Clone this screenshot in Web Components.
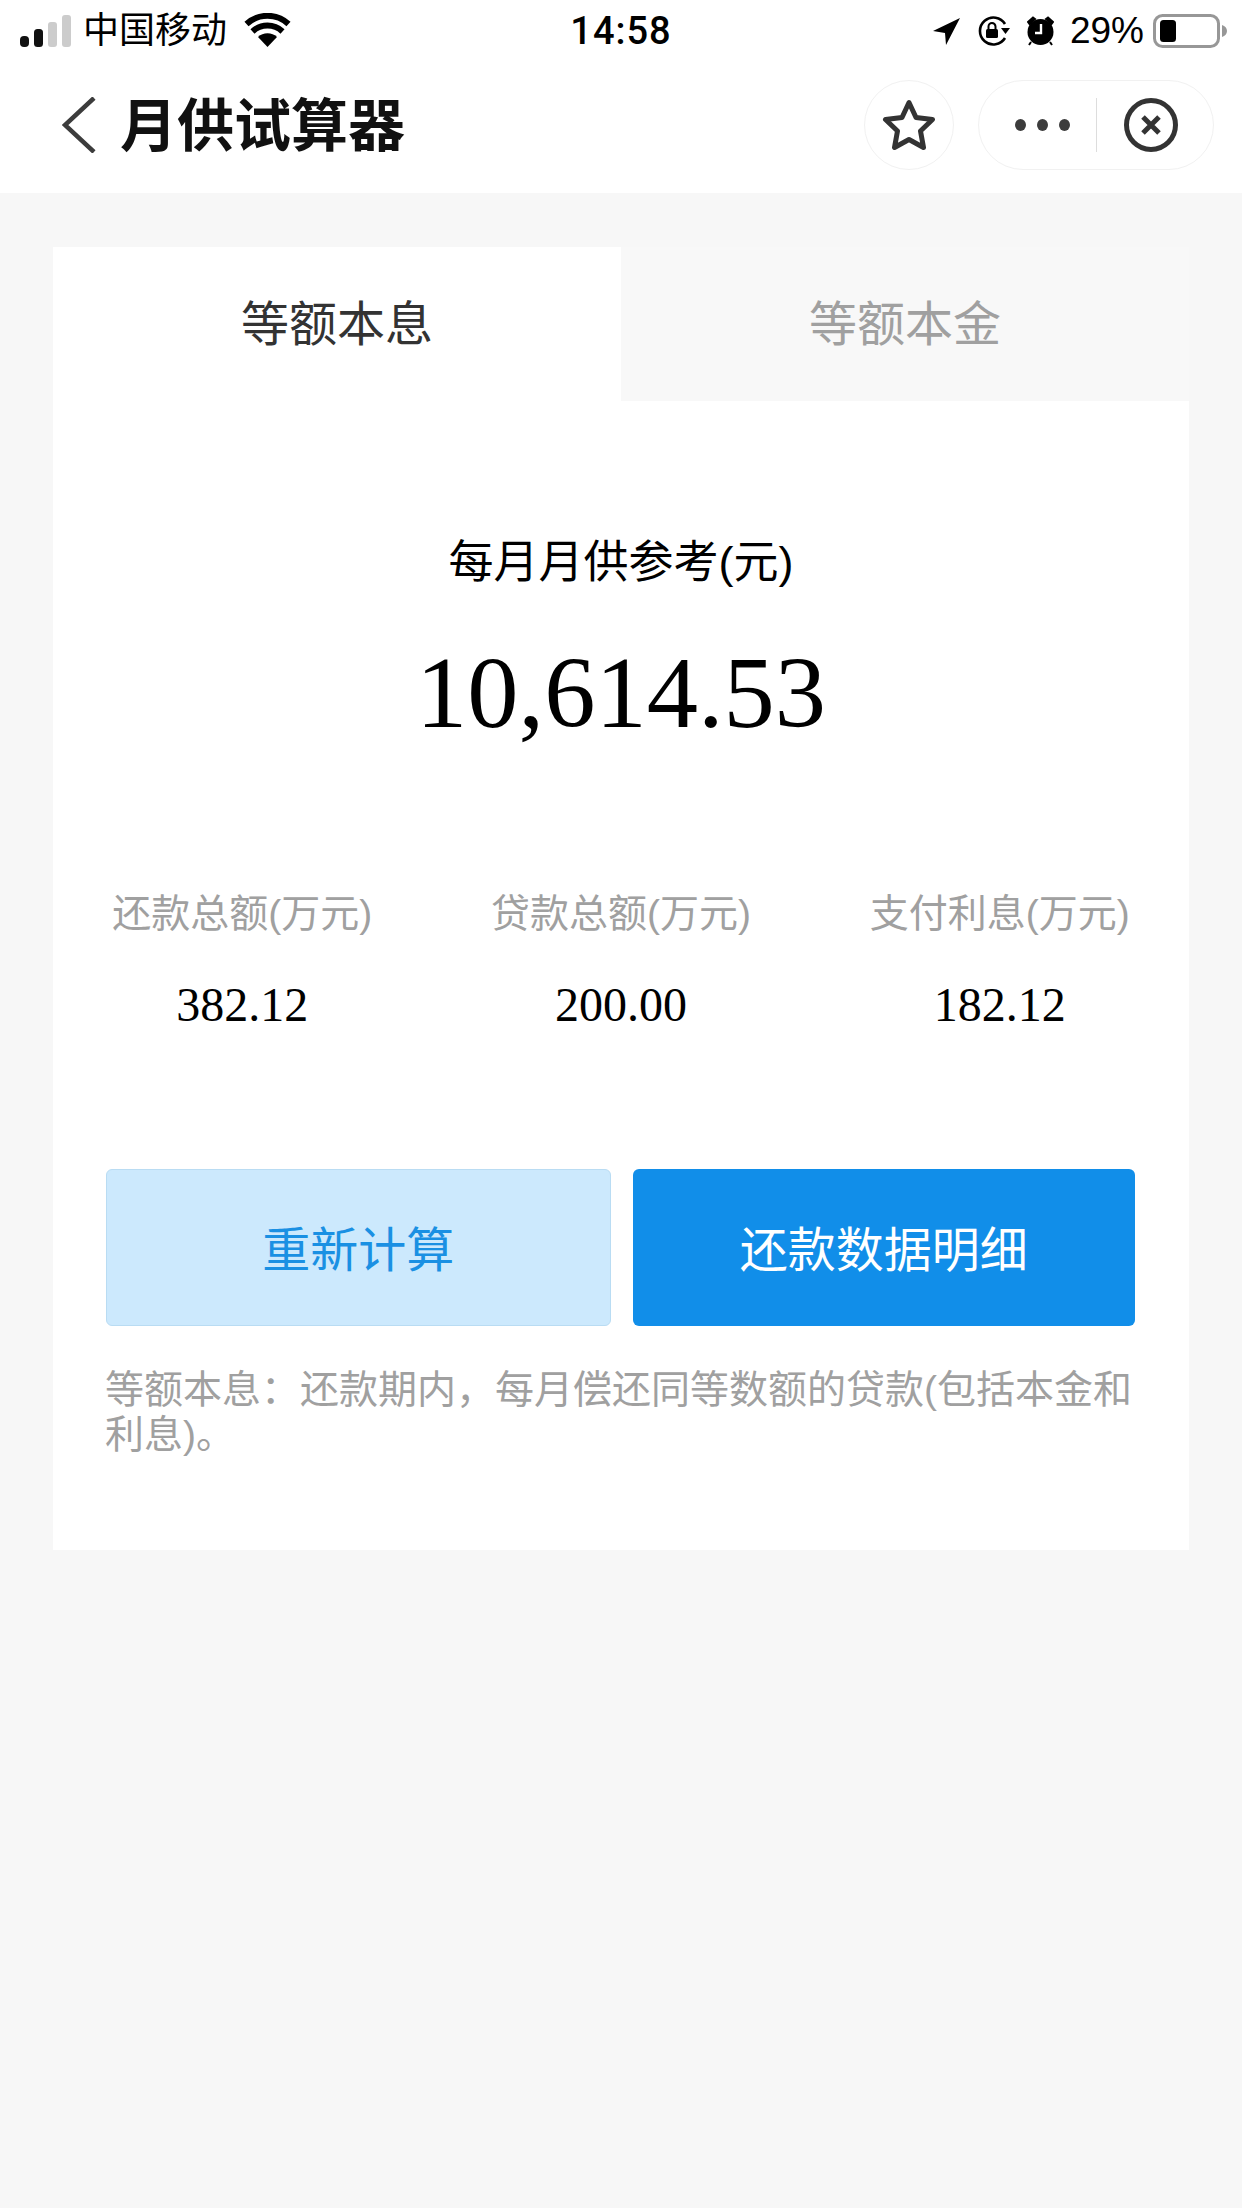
<!DOCTYPE html>
<html lang="zh">
<head>
<meta charset="utf-8">
<title>月供试算器</title>
<style>
  html, body { margin: 0; padding: 0; }
  body {
    width: 1242px;
    min-height: 2208px;
    background: #f7f7f7;
    font-family: "Liberation Sans", "Noto Sans CJK SC", sans-serif;
  }
</style>
</head>
<body>
<status-bar></status-bar>
<nav-bar title="月供试算器"></nav-bar>
<calc-card>
  <calc-tabs slot="tabs" active="等额本息" other="等额本金"></calc-tabs>
  <monthly-amount slot="amount" label="每月月供参考(元)" value="10,614.53"></monthly-amount>
  <stat-item slot="stats" label="还款总额(万元)" value="382.12"></stat-item>
  <stat-item slot="stats" label="贷款总额(万元)" value="200.00"></stat-item>
  <stat-item slot="stats" label="支付利息(万元)" value="182.12"></stat-item>
  <action-button slot="actions" kind="light">重新计算</action-button>
  <action-button slot="actions" kind="primary">还款数据明细</action-button>
  <span slot="note">等额本息：还款期内，每月偿还同等数额的贷款(包括本金和利息)。</span>
</calc-card>

<script>
class StatusBar extends HTMLElement {
  constructor() {
    super();
    this.attachShadow({ mode: "open" });
    this.shadowRoot.innerHTML = `
      <style>
        :host {
          display: grid;
          grid-template-columns: 1fr auto 1fr;
          align-items: center;
          height: 58px;
          padding: 2px 15px 0 20px;
          box-sizing: border-box;
          background: #fff;
          color: #000;
          font-size: 36px;
        }
        .left, .right { display: flex; align-items: center; }
        .right { justify-content: flex-end; }
        .carrier { margin-left: 12px; line-height: 58px; }
        .wifi { margin-left: 17px; margin-top: -3px; }
        .time { margin-right: 5px; font-family: Roboto, sans-serif; font-weight: 500; font-size: 38px; letter-spacing: 1px; }
        .loc { margin-right: 18px; }
        .lock { margin-right: 17px; }
        .alarm { margin-right: 16px; }
        .pct { font-family: "Liberation Sans", sans-serif; font-size: 37px; margin-right: 9px; }
        svg { display: block; }
      </style>
      <div class="left">
        <svg width="51" height="32" viewBox="0 0 51 32">
          <rect x="0" y="21" width="9" height="11" rx="4" fill="#111"/>
          <rect x="14" y="14" width="9" height="18" rx="3.5" fill="#111"/>
          <rect x="28" y="7" width="9" height="25" rx="3" fill="#ccc"/>
          <rect x="42" y="0" width="9" height="32" rx="3" fill="#ccc"/>
        </svg>
        <span class="carrier">中国移动</span>
        <svg class="wifi" width="47" height="34" viewBox="0 0 47 34">
          <path d="M23.5 34 L14 24 A14 14 0 0 1 33 24 Z" fill="#000"/>
          <path d="M8.5 18.5 A22 22 0 0 1 38.5 18.5" fill="none" stroke="#000" stroke-width="6"/>
          <path d="M2.5 11 A31 31 0 0 1 44.5 11" fill="none" stroke="#000" stroke-width="6"/>
        </svg>
      </div>
      <div class="time">14:58</div>
      <div class="right">
        <svg class="loc" width="27" height="27" viewBox="0 0 27 27">
          <path d="M27 0 L0 13 L12 15 L13 27 Z" fill="#000"/>
        </svg>
        <svg class="lock" width="32" height="30" viewBox="0 0 32 30">
          <path d="M27 8 A13.5 13.5 0 1 0 27 22" fill="none" stroke="#000" stroke-width="2.6"/>
          <path d="M23 12 L32 12 L27.500 18 Z" fill="#000"/>
          <rect x="8" y="13" width="12" height="9" rx="1.500" fill="#000"/>
          <path d="M10.500 13 V10.500 A3.500 3.500 0 0 1 17.500 10.500 V13" fill="none" stroke="#000" stroke-width="2"/>
        </svg>
        <svg class="alarm" width="27" height="30" viewBox="0 0 27 30">
          <circle cx="13.500" cy="16" r="13" fill="#000"/>
          <path d="M1 6 L6 1.500 L8 3 L2.500 8 Z M26 6 L21 1.500 L19 3 L24.500 8 Z M4 26 L2 29 M23 26 L25 29" fill="#000" stroke="#000" stroke-width="2"/>
          <path d="M14 8 V17 H8" fill="none" stroke="#fff" stroke-width="2.400"/>
        </svg>
        <span class="pct">29%</span>
        <svg width="74" height="34" viewBox="0 0 74 34">
          <rect x="1.500" y="1.500" width="64" height="31" rx="8" fill="none" stroke="#979797" stroke-width="3"/>
          <rect x="7" y="6" width="16" height="22" rx="3.500" fill="#000"/>
          <path d="M69 11 C72 12 74 14 74 17 C74 20 72 22 69 23 Z" fill="#979797"/>
        </svg>
      </div>
    `;
  }
}
customElements.define("status-bar", StatusBar);

class NavBar extends HTMLElement {
  constructor() {
    super();
    this.attachShadow({ mode: "open" });
    this.shadowRoot.innerHTML = `
      <style>
        :host {
          display: flex;
          align-items: center;
          height: 135px;
          padding: 0 28px 2px 62px;
          box-sizing: border-box;
          background: #fff;
        }
        .back { display: block; flex: none; }
        h1 {
          flex: 1;
          margin: 2px 0 0 24px;
          font-size: 57px;
          line-height: 70px;
          font-weight: 700;
          color: #111;
        }
        .star, .capsule {
          height: 90px;
          box-sizing: border-box;
          border: 1px solid #f1f1f1;
          border-radius: 45px;
          display: flex;
          align-items: center;
        }
        .star { width: 90px; justify-content: center; margin-right: 24px; }
        .capsule { width: 236px; }
        .more { width: 117px; padding-left: 9px; box-sizing: border-box; display: flex; justify-content: center; gap: 11px; }
        .more i { width: 11px; height: 12px; border-radius: 50%; background: #3c3c3c; }
        .line { width: 1px; height: 54px; background: #ddd; }
        .close { flex: 1; padding-right: 8px; display: flex; justify-content: center; }
        svg { display: block; }
      </style>
      <svg class="back" width="34" height="56" viewBox="0 0 34 56">
        <path d="M32 1 L3 28 L32 55" fill="none" stroke="#3c3c3c" stroke-width="4.500"/>
      </svg>
      <h1></h1>
      <div class="star">
        <svg width="54" height="52" viewBox="0 0 54 52">
          <path d="M27 3.500 L34 18.500 L50.500 20.500 L38.500 32 L41.500 48.500 L27 40.500 L12.500 48.500 L15.500 32 L3.500 20.500 L20 18.500 Z" fill="none" stroke="#333" stroke-width="5" stroke-linejoin="round"/>
        </svg>
      </div>
      <div class="capsule">
        <div class="more"><i></i><i></i><i></i></div>
        <div class="line"></div>
        <div class="close">
          <svg width="54" height="54" viewBox="0 0 54 54">
            <circle cx="27" cy="27" r="24.500" fill="none" stroke="#333" stroke-width="5"/>
            <path d="M19 19 L35 35 M35 19 L19 35" stroke="#333" stroke-width="5" fill="none"/>
          </svg>
        </div>
      </div>
    `;
    this.shadowRoot.querySelector("h1").textContent = this.getAttribute("title");
  }
}
customElements.define("nav-bar", NavBar);

class CalcCard extends HTMLElement {
  constructor() {
    super();
    this.attachShadow({ mode: "open" });
    this.shadowRoot.innerHTML = `
      <style>
        :host {
          display: block;
          margin: 54px 53px 0;
          background: #fff;
        }
        .stats {
          display: grid;
          grid-template-columns: repeat(3, 1fr);
          margin-top: 136px;
        }
        .actions {
          display: flex;
          gap: 22px;
          margin: 136px 54px 0 53px;
        }
        .note {
          margin: 41px 54px 0 52px;
          padding-bottom: 93px;
          font-size: 39px;
          line-height: 45px;
          color: #a0a0a0;
        }
      </style>
      <slot name="tabs"></slot>
      <slot name="amount"></slot>
      <div class="stats"><slot name="stats"></slot></div>
      <div class="actions"><slot name="actions"></slot></div>
      <div class="note"><slot name="note"></slot></div>
    `;
  }
}
customElements.define("calc-card", CalcCard);

class CalcTabs extends HTMLElement {
  constructor() {
    super();
    this.attachShadow({ mode: "open" });
    this.shadowRoot.innerHTML = `
      <style>
        :host {
          display: grid;
          grid-template-columns: 1fr 1fr;
          height: 154px;
          font-size: 48px;
          text-align: center;
        }
        div { height: 154px; padding-top: 2px; box-sizing: border-box; line-height: 152px; }
        .on { color: #333; background: #fff; }
        .off { color: #a0a0a0; background: #f8f8f8; }
      </style>
      <div class="on"></div>
      <div class="off"></div>
    `;
    this.shadowRoot.querySelector(".on").textContent = this.getAttribute("active");
    this.shadowRoot.querySelector(".off").textContent = this.getAttribute("other");
  }
}
customElements.define("calc-tabs", CalcTabs);

class MonthlyAmount extends HTMLElement {
  constructor() {
    super();
    this.attachShadow({ mode: "open" });
    this.shadowRoot.innerHTML = `
      <style>
        :host {
          display: block;
          padding-top: 132px;
          text-align: center;
          color: #000;
        }
        .label { font-size: 45px; line-height: 60px; }
        .value {
          margin-top: 40px;
          font-family: "Liberation Serif", serif;
          font-size: 102.5px;
          line-height: 120px;
        }
      </style>
      <div class="label"></div>
      <div class="value"></div>
    `;
    this.shadowRoot.querySelector(".label").textContent = this.getAttribute("label");
    this.shadowRoot.querySelector(".value").textContent = this.getAttribute("value");
  }
}
customElements.define("monthly-amount", MonthlyAmount);

class StatItem extends HTMLElement {
  constructor() {
    super();
    this.attachShadow({ mode: "open" });
    this.shadowRoot.innerHTML = `
      <style>
        :host { display: block; text-align: center; }
        .label { font-size: 39px; line-height: 50px; color: #a0a0a0; }
        .value {
          margin-top: 38px;
          font-family: "Liberation Serif", serif;
          font-size: 48px;
          line-height: 56px;
          color: #000;
        }
      </style>
      <div class="label"></div>
      <div class="value"></div>
    `;
    this.shadowRoot.querySelector(".label").textContent = this.getAttribute("label");
    this.shadowRoot.querySelector(".value").textContent = this.getAttribute("value");
  }
}
customElements.define("stat-item", StatItem);

class ActionButton extends HTMLElement {
  constructor() {
    super();
    this.attachShadow({ mode: "open" });
    this.shadowRoot.innerHTML = `
      <style>
        :host {
          flex: 1;
          display: flex;
          align-items: center;
          justify-content: center;
          height: 157px;
          padding-bottom: 4px;
          box-sizing: border-box;
          border-radius: 6px;
          font-size: 48px;
        }
        :host([kind="light"]) { background: #cce9fd; border: 1px solid #b9dcf3; color: #1a90e3; }
        :host([kind="primary"]) { background: #118ee9; color: #fff; }
      </style>
      <slot></slot>
    `;
  }
}
customElements.define("action-button", ActionButton);
</script>
</body>
</html>
